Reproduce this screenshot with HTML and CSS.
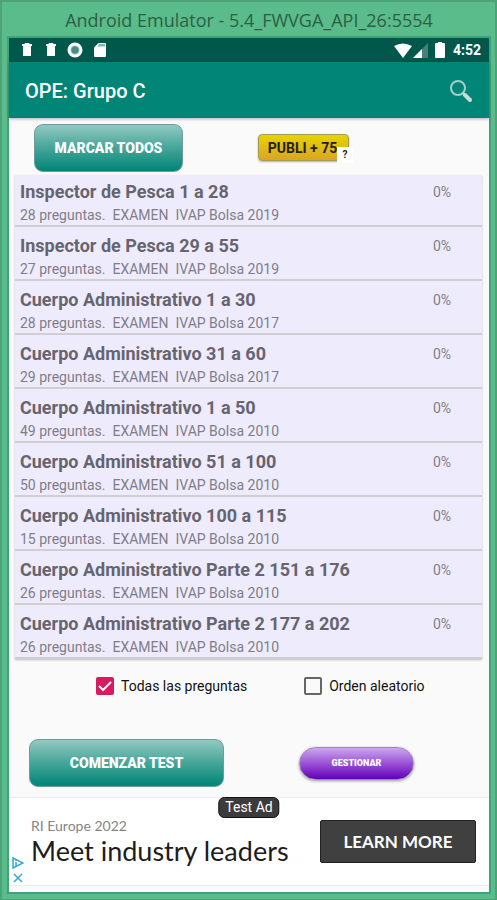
FILE: index.html
```html
<!DOCTYPE html>
<html lang="es">
<head>
<meta charset="utf-8">
<meta name="viewport" content="width=device-width, initial-scale=1">
<title>OPE: Grupo C</title>
<link rel="stylesheet" href="styles.css">
</head>
<body>
<div class="window">
  <div class="window-title">Android Emulator - 5.4_FWVGA_API_26:5554</div>
  <div class="screen">
    <div class="status-bar">
      <div class="status-group notifications">
        <svg width="12" height="14" viewBox="0 0 12 14" aria-hidden="true"><path fill="#fff" d="M1 1h2.500l.5-1h4l.5 1H11v2H1zM2 3h8v10H2z"/></svg>
        <svg width="12" height="14" viewBox="0 0 12 14" aria-hidden="true"><path fill="#fff" d="M1 1h2.500l.5-1h4l.5 1H11v2H1zM2 3h8v10H2z"/></svg>
        <svg width="16" height="16" viewBox="0 0 16 16" aria-hidden="true"><circle cx="8" cy="8" r="6" fill="#8fbdb5" stroke="#fff" stroke-width="3"/><circle cx="8" cy="8" r="3.500" fill="#4b8d81"/></svg>
        <svg width="14" height="16" viewBox="0 0 14 16" aria-hidden="true"><path fill="#fff" d="M5.500 1H12a1 1 0 0 1 1 1v12a1 1 0 0 1-1 1H2a1 1 0 0 1-1-1V5.500z"/><path fill="#8fb3ae" d="M6 2h6v2.500H4.500z"/></svg>
      </div>
      <div class="status-group system">
        <svg width="18" height="15" viewBox="0 0 18 15" aria-hidden="true"><path fill="#fff" d="M0 3Q9-2 18 3L9 15z"/></svg>
        <svg class="signal" width="15" height="15" viewBox="0 0 15 15" aria-hidden="true"><path fill="#478078" d="M15 0v15H0z"/><path fill="#fff" d="M9 6v9H0z"/></svg>
        <svg class="battery" width="10" height="16" viewBox="0 0 10 16" aria-hidden="true"><path fill="#fff" d="M3 0h4v1h2a1 1 0 0 1 1 1v13a1 1 0 0 1-1 1H1a1 1 0 0 1-1-1V2a1 1 0 0 1 1-1h2z"/></svg>
        <span class="clock">4:52</span>
      </div>
    </div>
    <header class="app-bar">
      <h1>OPE: Grupo C</h1>
      <button class="search" type="button" aria-label="Buscar">
        <svg width="24" height="24" viewBox="0 0 24 24" aria-hidden="true"><circle cx="9" cy="9" r="7" fill="none" stroke="#a5cfca" stroke-width="2"/><path d="M14 14l2 2" stroke="#c4dfdb" stroke-width="2"/><path d="M16 16l5 5" stroke="#c4dfdb" stroke-width="4" stroke-linecap="round"/></svg>
      </button>
    </header>
    <main>
      <div class="top-actions">
        <button class="btn teal" type="button">MARCAR TODOS</button>
        <div class="publi">
          <button class="btn-gold" type="button">PUBLI + 75</button>
          <span class="help">?</span>
        </div>
      </div>
      <ul class="tests">
        <li><div><h2>Inspector de Pesca 1 a 28</h2><p>28 preguntas.  EXAMEN  IVAP Bolsa 2019</p></div><span>0%</span></li>
        <li><div><h2>Inspector de Pesca 29 a 55</h2><p>27 preguntas.  EXAMEN  IVAP Bolsa 2019</p></div><span>0%</span></li>
        <li><div><h2>Cuerpo Administrativo 1 a 30</h2><p>28 preguntas.  EXAMEN  IVAP Bolsa 2017</p></div><span>0%</span></li>
        <li><div><h2>Cuerpo Administrativo 31 a 60</h2><p>29 preguntas.  EXAMEN  IVAP Bolsa 2017</p></div><span>0%</span></li>
        <li><div><h2>Cuerpo Administrativo 1 a 50</h2><p>49 preguntas.  EXAMEN  IVAP Bolsa 2010</p></div><span>0%</span></li>
        <li><div><h2>Cuerpo Administrativo 51 a 100</h2><p>50 preguntas.  EXAMEN  IVAP Bolsa 2010</p></div><span>0%</span></li>
        <li><div><h2>Cuerpo Administrativo 100 a 115</h2><p>15 preguntas.  EXAMEN  IVAP Bolsa 2010</p></div><span>0%</span></li>
        <li><div><h2>Cuerpo Administrativo Parte 2 151 a 176</h2><p>26 preguntas.  EXAMEN  IVAP Bolsa 2010</p></div><span>0%</span></li>
        <li><div><h2>Cuerpo Administrativo Parte 2 177 a 202</h2><p>26 preguntas.  EXAMEN  IVAP Bolsa 2010</p></div><span>0%</span></li>
      </ul>
      <div class="options">
        <label><span class="check"><input type="checkbox" checked><svg width="18" height="18" viewBox="0 0 18 18" aria-hidden="true"><path d="M3 9l4 4 8-8" fill="none" stroke="#fff" stroke-width="2"/></svg></span>Todas las preguntas</label>
        <label><span class="check"><input type="checkbox"><svg width="18" height="18" viewBox="0 0 18 18" aria-hidden="true"><path d="M3 9l4 4 8-8" fill="none" stroke="#fff" stroke-width="2"/></svg></span>Orden aleatorio</label>
      </div>
      <div class="bottom-actions">
        <button class="btn teal wide" type="button">COMENZAR TEST</button>
        <button class="btn-purple" type="button">GESTIONAR</button>
      </div>
    </main>
    <aside class="ad">
      <span class="ad-badge">Test Ad</span>
      <div class="ad-icons">
        <svg width="12" height="12" viewBox="0 0 12 12" aria-hidden="true"><path d="M1 1v10l10-5zM4 5v4" fill="none" stroke="#2fa9d6" stroke-width="1.500"/><path d="M4 2.500v1.500" stroke="#2fa9d6" stroke-width="1.500"/></svg>
        <svg width="12" height="12" viewBox="0 0 12 12" aria-hidden="true"><path d="M2 2l8 8M10 2l-8 8" stroke="#2fa9d6" stroke-width="1.500"/></svg>
      </div>
      <div class="ad-text">
        <p class="advertiser">RI Europe 2022</p>
        <p class="headline">Meet industry leaders</p>
      </div>
      <a class="ad-cta" href="#">LEARN MORE</a>
    </aside>
  </div>
</div>
</body>
</html>
```
FILE: styles.css
```css
* { box-sizing: border-box; margin: 0; padding: 0; }
body { font-family: Roboto, "Liberation Sans", sans-serif; }
button { font-family: inherit; border: 0; cursor: pointer; }

.window {
  min-height: 100vh;
  display: flex;
  flex-direction: column;
  padding: 0 8px 9px 9px;
  background: #5abc8a;
  box-shadow: inset 0 0 0 2px #4ba377;
}
.window-title {
  height: 38px;
  line-height: 40px;
  text-align: center;
  font-family: "Open Sans", "Noto Sans", sans-serif;
  font-size: 18px;
  color: #2c5f45;
  white-space: nowrap;
}
.screen {
  flex: 1;
  display: flex;
  flex-direction: column;
  background: #fafafa;
  box-shadow: 0 0 0 2px #3fa377;
}

.status-bar {
  height: 24px;
  display: flex;
  align-items: center;
  justify-content: space-between;
  padding: 0 8px 0 12px;
  background: #00574b;
}
.status-group { display: flex; align-items: center; }
.notifications { gap: 10px; }
.notifications svg:nth-child(1) { margin-right: 2px; }
.signal { margin-left: 1px; }
.battery { margin: 0 8px 0 7px; }
.clock { font-size: 14px; font-weight: 700; color: #fff; }

.app-bar {
  height: 56px;
  display: flex;
  align-items: center;
  justify-content: space-between;
  padding: 2px 16px 0;
  background: #008577;
  box-shadow: 0 1px 3px rgba(0, 0, 0, .3);
}
.app-bar h1 { font-size: 20px; font-weight: 500; color: #fff; line-height: 24px; }
.search { display: flex; background: none; }

.top-actions {
  height: 57px;
  display: flex;
  align-items: center;
  padding: 2px 0 0 25px;
}
.btn {
  width: 149px;
  height: 48px;
  border: 1px solid #6f9c96;
  border-radius: 9px;
  color: #fff;
  font-size: 14px;
  font-weight: 900;
}
.teal { background: linear-gradient(#92c9c2, #45a598 50%, #008577); }
.wide { width: 195px; }
.publi { position: relative; margin-left: 75px; }
.btn-gold {
  display: block;
  width: 91px;
  height: 27px;
  padding-right: 2px;
  border: 1px solid #a29a55;
  border-radius: 4px;
  background: linear-gradient(#e6d400, #d9a526);
  box-shadow: 0 1px 2px rgba(0, 0, 0, .3);
  color: #241f08;
  font-size: 14px;
  font-weight: 700;
  white-space: nowrap;
}
.help {
  position: absolute;
  right: -4px;
  bottom: -2px;
  width: 16px;
  height: 16px;
  background: #fff;
  font-size: 10px;
  font-weight: 700;
  line-height: 16px;
  text-align: center;
  color: #222;
}

.tests { list-style: none; margin: 0 7px 0 6px; box-shadow: 0 1px 2px rgba(0, 0, 0, .25); }
.tests li {
  height: 54px;
  display: flex;
  justify-content: space-between;
  padding: 8px 31px 0 5px;
  background: #eeecfc;
  border-bottom: 2px solid #cfcfd2;
}
.tests li:first-child { height: 52px; padding-top: 6px; }
.tests h2 { font-size: 18px; font-weight: 700; line-height: 22px; color: #66646f; }
.tests p { font-size: 14px; line-height: 24px; color: #7f7d88; white-space: pre; }
.tests span { font-size: 14px; line-height: 22px; color: #7f7d88; }

.options {
  height: 54px;
  display: flex;
  align-items: center;
  gap: 57px;
  padding-left: 87px;
}
.options label { display: flex; align-items: center; gap: 7px; font-size: 14px; color: #111; white-space: nowrap; }
.check { display: grid; }
.check > * { grid-area: 1 / 1; }
.check input {
  appearance: none;
  width: 18px;
  height: 18px;
  border: 2px solid #666;
  border-radius: 2px;
}
.check input:checked { background: #d81b60; border-color: #d81b60; }
.check svg { visibility: hidden; pointer-events: none; }
.check input:checked + svg { visibility: visible; }

.bottom-actions {
  display: flex;
  align-items: center;
  padding: 26px 0 10px 20px;
}
.btn-purple {
  width: 115px;
  height: 33px;
  margin-left: 75px;
  border: 1px solid #9a86b8;
  border-radius: 17px;
  background: linear-gradient(#cba6ef, #9040d0 60%, #6200b8);
  box-shadow: 0 1px 3px rgba(0, 0, 0, .4);
  color: #fff;
  font-size: 9px;
  font-weight: 900;
}

.ad {
  position: relative;
  height: 89px;
  display: flex;
  align-items: center;
  justify-content: space-between;
  margin: 0 0 6px;
  padding: 0 13px 0 22px;
  background: #fff;
  border-top: 1px solid #eee;
  border-bottom: 1px solid #eee;
  font-family: Lato, Roboto, sans-serif;
}
.ad-badge {
  position: absolute;
  top: -1px;
  left: 50%;
  transform: translateX(-50%);
  padding: 0 6px;
  border: 1px solid #111;
  border-radius: 6px;
  background: #3c3c3c;
  color: #fff;
  font: 14px/19px Roboto, sans-serif;
  white-space: nowrap;
}
.ad-icons { position: absolute; left: 3px; bottom: 1px; display: grid; gap: 3px; }
.advertiser { font-size: 14px; line-height: 17px; color: #858585; }
.headline { font-size: 27px; line-height: 33px; color: #1d1d1d; white-space: nowrap; }
.ad-cta {
  width: 156px;
  height: 43px;
  border: 1px solid #222;
  border-radius: 2px;
  background: #404040;
  color: #fff;
  font-size: 17px;
  font-weight: 700;
  line-height: 42px;
  text-align: center;
  text-decoration: none;
}
```
